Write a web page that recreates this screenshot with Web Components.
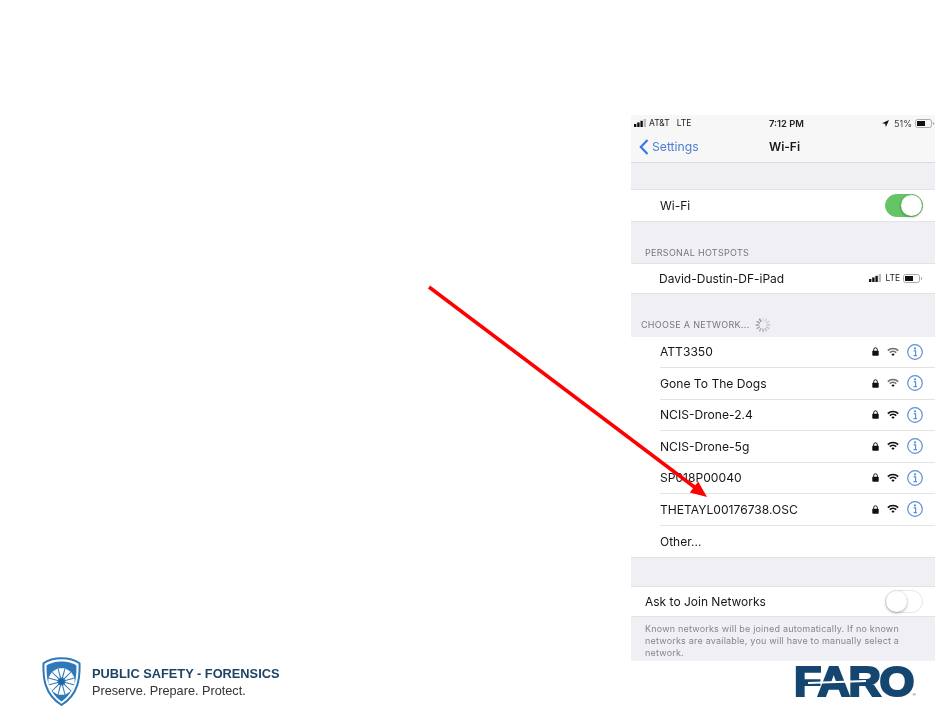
<!doctype html>
<html>
<head>
<meta charset="utf-8">
<title>Wi-Fi slide</title>
<style>
  html, body { margin: 0; background: #fff; }
</style>
</head>
<body>
<slide-page>
  <wifi-panel>
    <status-bar></status-bar>
    <nav-bar></nav-bar>
    <wifi-gap h="26"></wifi-gap>
    <wifi-row h="33" pad="29"><span>Wi-Fi</span><ios-switch slot="end" on></ios-switch></wifi-row>
    <wifi-gap h="41" label="PERSONAL HOTSPOTS" indent="14" pb="5"></wifi-gap>
    <wifi-row h="31" pad="28"><span>David-Dustin-DF-iPad</span><hotspot-state slot="end"></hotspot-state></wifi-row>
    <wifi-gap h="43" label="CHOOSE A NETWORK..." indent="10" pb="7" spinner></wifi-gap>
    <wifi-list>
      <net-row name="ATT3350" weak></net-row>
      <net-row name="Gone To The Dogs" weak></net-row>
      <net-row name="NCIS-Drone-2.4"></net-row>
      <net-row name="NCIS-Drone-5g"></net-row>
      <net-row name="SP018P00040"></net-row>
      <net-row name="THETAYL00176738.OSC"></net-row>
      <wifi-row h="32" pad="29"><span>Other...</span></wifi-row>
    </wifi-list>
    <wifi-gap h="28"></wifi-gap>
    <wifi-row h="31" pad="14"><span>Ask to Join Networks</span><ios-switch slot="end"></ios-switch></wifi-row>
    <wifi-note>Known networks will be joined automatically. If no known networks are available, you will have to manually select a network.</wifi-note>
  </wifi-panel>
  <slide-footer>
    <safety-logo></safety-logo>
    <faro-logo></faro-logo>
  </slide-footer>
  <red-arrow></red-arrow>
</slide-page>

<script>
const WIFI = (opacity) => `<svg width="12" height="10" viewBox="0 0 12 10"><g fill="none" stroke="#111" stroke-width="1.6" opacity="${opacity}"><path d="M.8 3.6a7.4 7.4 0 0 1 10.4 0"/><path d="M2.8 5.6a4.6 4.6 0 0 1 6.4 0"/></g><path d="M4.4 7.2a2.3 2.3 0 0 1 3.2 0L6 9z" fill="#111"/></svg>`;
const BARS = `<svg width="13" height="8" viewBox="0 0 13 8"><rect x="0" y="5" width="2.4" height="3" fill="#111"/><rect x="3.2" y="3.4" width="2.4" height="4.6" fill="#111"/><rect x="6.4" y="1.8" width="2.4" height="6.2" fill="#111"/><rect x="9.6" y="0" width="2.4" height="8" fill="#bbb"/></svg>`;
const BATTERY = `<svg width="20" height="9" viewBox="0 0 20 9"><rect x=".5" y=".5" width="16" height="8" rx="2" fill="none" stroke="#aaa"/><rect x="2" y="2" width="8" height="5" fill="#111"/><path d="M18 3v3c.8 0 1.2-.6 1.2-1.5S18.800 3 18 3z" fill="#aaa"/></svg>`;

function define(name, css, html) {
  customElements.define(name, class extends HTMLElement {
    connectedCallback() {
      if (this.shadowRoot) return;
      this.attachShadow({mode: 'open'});
      this.shadowRoot.innerHTML = `<style>${css}</style>` + (typeof html === 'function' ? html(this) : html);
    }
  });
}

define('slide-page', `
  :host { display: flex; flex-direction: column; position: relative; width: 950px; height: 709px; overflow: hidden; background: #fff; font-family: Inter, "Liberation Sans", sans-serif; }
`, `<slot></slot>`);

define('wifi-panel', `
  :host { display: flex; flex: none; flex-direction: column; width: 304px; height: 546px; margin: 115px 0 0 631px; background: #efeff4; overflow: hidden; color: #161616; filter: blur(.3px); }
`, `<slot></slot>`);

define('status-bar', `
  :host { display: grid; flex: none; grid-template-columns: 1fr auto 1fr; align-items: center; height: 16.500px; padding: 0 0 0 3px; background: #f7f7f8; font-size: 8.500px; color: #222; }
  .l, .r { display: flex; align-items: center; gap: 2px; }
  .r { justify-content: flex-end; gap: 3px; }
  .r span { margin-left: 2px; font-size: 9px; color: #444; }
  b { font-weight: 600; font-size: 9.400px; margin-left: 4px; }
  .lte { margin-left: 5px; }
`, `<div class="l">${BARS}<span>AT&amp;T</span><span class="lte">LTE</span></div>
  <b>7:12 PM</b>
  <div class="r"><svg width="7" height="7" viewBox="0 0 8 8"><path d="M8 0L0 3.600l3.600.8.800 3.600z" fill="#111"/></svg><span>51%</span>${BATTERY}</div>`);

define('nav-bar', `
  :host { display: grid; flex: none; grid-template-columns: 1fr auto 1fr; align-items: center; height: 31px; box-sizing: border-box; padding: 0 8px; background: #f7f7f8; border-bottom: 1px solid #dcdce0; font-size: 12.200px; }
  .back { display: flex; align-items: center; gap: 3px; color: #4a7fd0; }
  b { font-weight: 600; font-size: 12px; color: #1a1a1a; margin-left: 3px; }
`, `<div class="back"><svg width="10" height="16" viewBox="0 0 10 16"><path d="M8.500 1L1.800 8l6.700 7" fill="none" stroke="#3b78e0" stroke-width="2.200"/></svg><span>Settings</span></div><b>Wi-Fi</b>`);

define('wifi-gap', `
  :host { display: flex; flex: none; align-items: flex-end; gap: 5px; background: #efeff4; box-sizing: border-box; font-size: 9px; letter-spacing: .3px; color: #77777c; }
`, el => {
  el.style.height = el.getAttribute('h') + 'px';
  el.style.paddingLeft = (el.getAttribute('indent') || 0) + 'px';
  el.style.paddingBottom = (el.getAttribute('pb') || 0) + 'px';
  const ticks = Array.from({length: 12}, (_, i) => `<rect x="7.300" y="0.500" width="1.400" height="4" rx=".7" fill="#8e8e93" opacity="${(0.2 + i * 0.07).toFixed(2)}" transform="rotate(${i * 30} 8 8)"/>`).join('');
  const spin = el.hasAttribute('spinner') ? `<svg width="16" height="16" viewBox="0 0 16 16" style="margin-bottom:-3px">${ticks}</svg>` : '';
  return `<span>${el.getAttribute('label') || ''}</span>${spin}`;
});

define('wifi-row', `
  :host { display: flex; flex: none; align-items: center; justify-content: space-between; box-sizing: border-box; background: #fff; border-top: 1px solid #e3e3e6; border-bottom: 1px solid #e3e3e6; padding-right: 12px; font-size: 12px; }
`, el => {
  el.style.height = el.getAttribute('h') + 'px';
  el.style.paddingLeft = el.getAttribute('pad') + 'px';
  return `<slot></slot><slot name="end"></slot>`;
});

define('wifi-list', `
  :host { display: flex; flex: none; flex-direction: column; background: #fff; }
  ::slotted(wifi-row) { border-top: none; }
`, `<slot></slot>`);

define('net-row', `
  :host { display: block; background: #fff; padding-left: 29px; font-size: 12.100px; }
  .in { display: flex; align-items: center; height: 31.500px; box-sizing: border-box; border-bottom: 1px solid #e3e3e6; padding-right: 12px; }
  .name { flex: 1; }
  .icons { display: flex; align-items: center; gap: 8px; }
  .info { display: flex; }
`, el => `<div class="in"><span class="name">${el.getAttribute('name')}</span><span class="icons">
  <svg width="7" height="9" viewBox="0 0 7 9"><path d="M1.700 4V2.600a1.800 1.800 0 0 1 3.600 0V4" fill="none" stroke="#111"/><rect x="0.300" y="3.800" width="6.400" height="5" rx=".8" fill="#111"/></svg>
  ${WIFI(el.hasAttribute('weak') ? 0.6 : 1)}
  <svg class="info" width="16" height="16" viewBox="0 0 16 16"><circle cx="8" cy="8" r="7.300" fill="none" stroke="#5b8fd8" stroke-width="1.200"/><circle cx="8" cy="4.400" r="1.100" fill="#5b8fd8"/><path d="M6.600 6.800H8.600V11.400M6.500 11.600H9.900" fill="none" stroke="#5b8fd8" stroke-width="1.200"/></svg>
</span></div>`);

define('ios-switch', `
  :host { display: block; position: relative; width: 38px; height: 23px; border-radius: 12px; box-sizing: border-box; background: #fff; border: 1px solid #e6e6e8; }
  :host([on]) { background: #64c466; border-color: #64c466; }
  i { position: absolute; top: 0; left: 0; width: 21px; height: 21px; border-radius: 50%; background: #fff; box-shadow: 0 1px 3px rgba(0,0,0,.35); }
  :host([on]) i { left: auto; right: 0; }
`, `<i></i>`);

define('hotspot-state', `
  :host { display: flex; align-items: center; gap: 3px; font-size: 8.500px; color: #222; }
`, `${BARS}<span>LTE</span>${BATTERY}`);

define('wifi-note', `
  :host { display: block; padding: 6px 14px 0; font-size: 9px; line-height: 12px; letter-spacing: .2px; color: #85858a; background: #efeff4; flex: 1; }
`, `<slot></slot>`);

define('slide-footer', `
  :host { display: flex; justify-content: space-between; align-items: flex-end; flex: 1; margin-top: -8px; padding: 0 36px 3px 42px; filter: blur(.25px); }
`, `<slot></slot>`);

define('safety-logo', `
  :host { display: flex; align-items: center; gap: 11px; font-family: "Liberation Sans", Arial, sans-serif; }
  .t { display: flex; flex-direction: column; gap: 3px; }
  b { font-size: 12.800px; color: #1d4365; }
  span { font-size: 12.700px; color: #333; }
`, (() => {
  // white sectors between the spokes of the wheel
  const sectors = Array.from({length: 12}, (_, i) => {
    const a = i * 30 * Math.PI / 180, w = 13 * Math.PI / 180;
    const pt = (r, t) => `${(19.5 + r * Math.sin(t)).toFixed(2)} ${(24.5 - r * Math.cos(t)).toFixed(2)}`;
    return `<path d="M${pt(4, a - w / 2)}L${pt(13.5, a - w)}L${pt(13.5, a + w)}L${pt(4, a + w / 2)}z" fill="#fff"/>`;
  }).join('');
  return `<svg width="39" height="49" viewBox="0 0 39 49">
    <path d="M19.500 1.200C13 1.200 6 3 1.500 6.300 1 20 2 37 19.500 48 37 37 38 20 37.500 6.300 33 3 26 1.200 19.500 1.200z" fill="#fff" stroke="#2f79b8" stroke-width="2"/>
    <path d="M19.500 4.500C14 4.500 8 6 4.600 8.500 4.400 20 5 34 19.500 44.500 34 34 34.600 20 34.400 8.500 31 6 25 4.500 19.500 4.500z" fill="#2f79b8"/>
    ${sectors}
    <circle cx="19.500" cy="24.500" r="2.800" fill="#1f63a0"/>
  </svg><div class="t"><b>PUBLIC SAFETY - FORENSICS</b><span>Preserve. Prepare. Protect.</span></div>`;
})());

define('faro-logo', `
  :host { display: block; position: relative; width: 120px; height: 32px; margin-bottom: 8px; }
  .word { display: block; font: 900 42px/32px "Liberation Sans", Arial, sans-serif; color: #14466f; -webkit-text-stroke: 2.200px #14466f; letter-spacing: -1.400px; white-space: nowrap; transform-origin: 0 0; transform: scaleX(1.070); }
  .word small { font: 400 4px/4px "Liberation Sans", Arial, sans-serif; letter-spacing: 0; -webkit-text-stroke: 0; }
  .cut { position: absolute; left: 14px; top: 15px; width: 58px; height: 1.500px; background: #fff; transform: rotate(-2deg); }
`, `<span class="word">FARO<small>®</small></span><i class="cut"></i>`);

define('red-arrow', `
  :host { position: absolute; inset: 0; display: block; pointer-events: none; }
  svg { display: block; }
`, `<svg width="950" height="709" viewBox="0 0 950 709"><path d="M429 287L697 489" stroke="#f00" stroke-width="3.500" fill="none"/><path d="M707 497L689.800 492.600 698.200 481.400z" fill="#f00"/></svg>`);
</script>
</body>
</html>
